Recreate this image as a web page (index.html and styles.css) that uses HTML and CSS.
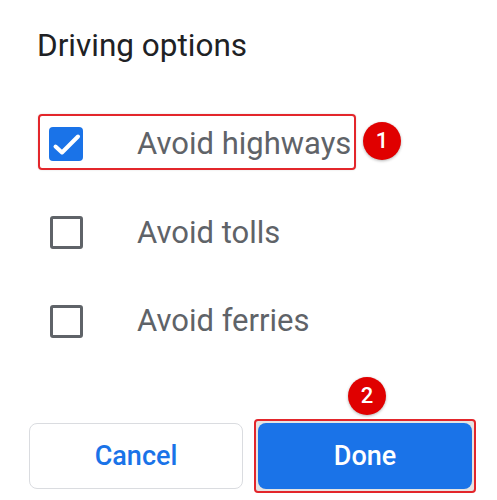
FILE: index.html
```html
<!DOCTYPE html>
<html>
<head>
<meta charset="utf-8">
<link rel="stylesheet" href="styles.css">
</head>
<body>
<div class="dialog">
  <h1 class="title">Driving options</h1>
  <ul class="options">
    <li class="option highlighted">
      <span class="box checked">
        <svg viewBox="0 0 34 34" width="34" height="34"><path d="M6.5 19.5L13 25.5L29 9.5" fill="none" stroke="#fff" stroke-width="4" stroke-linecap="round" stroke-linejoin="round"/></svg>
      </span>
      <span class="label">Avoid highways</span>
      <span class="badge badge-one">1</span>
    </li>
    <li class="option">
      <span class="box"></span>
      <span class="label">Avoid tolls</span>
    </li>
    <li class="option">
      <span class="box"></span>
      <span class="label">Avoid ferries</span>
    </li>
  </ul>
  <div class="actions">
    <button class="btn btn-cancel">Cancel</button>
    <div class="done-wrap">
      <button class="btn btn-done">Done</button>
      <span class="badge badge-two">2</span>
    </div>
  </div>
</div>
</body>
</html>
```
FILE: styles.css
```css
* { box-sizing: border-box; }
html, body { margin: 0; padding: 0; background: #fff; }
body { font-family: Roboto, "Open Sans", Arial, sans-serif; }
.dialog { width: 497px; height: 500px; padding-top: 28px; }
.title {
  margin: 0 0 0 37px;
  font-size: 31.5px;
  font-weight: 400;
  color: #202124;
  line-height: 36px;
}
.options {
  list-style: none;
  margin: 50px 0 0 0;
  padding: 0;
  display: flex;
  flex-direction: column;
  gap: 32.5px;
}
.option {
  position: relative;
  margin-left: 38px;
  width: 318px;
  height: 56px;
  border: 2px solid transparent;
  border-radius: 4px;
  padding: 12px 0 8px 10px;
  display: flex;
  align-items: center;
}
.option.highlighted {
  border-color: #e3262b;
  box-shadow: 0 0 2px rgba(0,0,0,0.15);
}
.box {
  flex: none;
  width: 33px;
  height: 33px;
  border: 3px solid #5f6368;
  border-radius: 3px;
}
.box.checked {
  width: 34px;
  height: 34px;
  margin-left: -1px;
  background: #1a73e8;
  border: none;
  border-radius: 4px;
}
.box.checked svg { display: block; }
.label {
  margin-left: 54px;
  font-size: 31px;
  color: #5f6368;
  line-height: 36px;
  white-space: nowrap;
}
.badge {
  position: absolute;
  width: 38px;
  height: 38px;
  border-radius: 50%;
  background: #e00000;
  color: #fff;
  font-family: Roboto, Arial, sans-serif;
  font-weight: 500;
  font-size: 22px;
  line-height: 38px;
  text-align: center;
  box-shadow: 0 1px 3px rgba(0,0,0,0.3);
}
.badge-one { left: 323px; top: 6px; }
.actions {
  display: flex;
  align-items: center;
  margin-top: 72px;
  padding-left: 29px;
  gap: 11px;
}
.btn {
  width: 214px;
  height: 66px;
  border-radius: 8px;
  font-family: Roboto, Arial, sans-serif;
  font-size: 27px;
  font-weight: 500;
  cursor: pointer;
}
.btn-cancel {
  background: #fff;
  border: 1.5px solid #dadce0;
  color: #1a73e8;
}
.done-wrap {
  position: relative;
  border: 2px solid #e3262b;
  border-radius: 4px;
  padding: 2px;
  background: #e4e4e4;
}
.btn-done {
  display: block;
  background: #1a73e8;
  border: none;
  color: #fff;
}
.badge-two { left: 92px; top: -44px; }
```
